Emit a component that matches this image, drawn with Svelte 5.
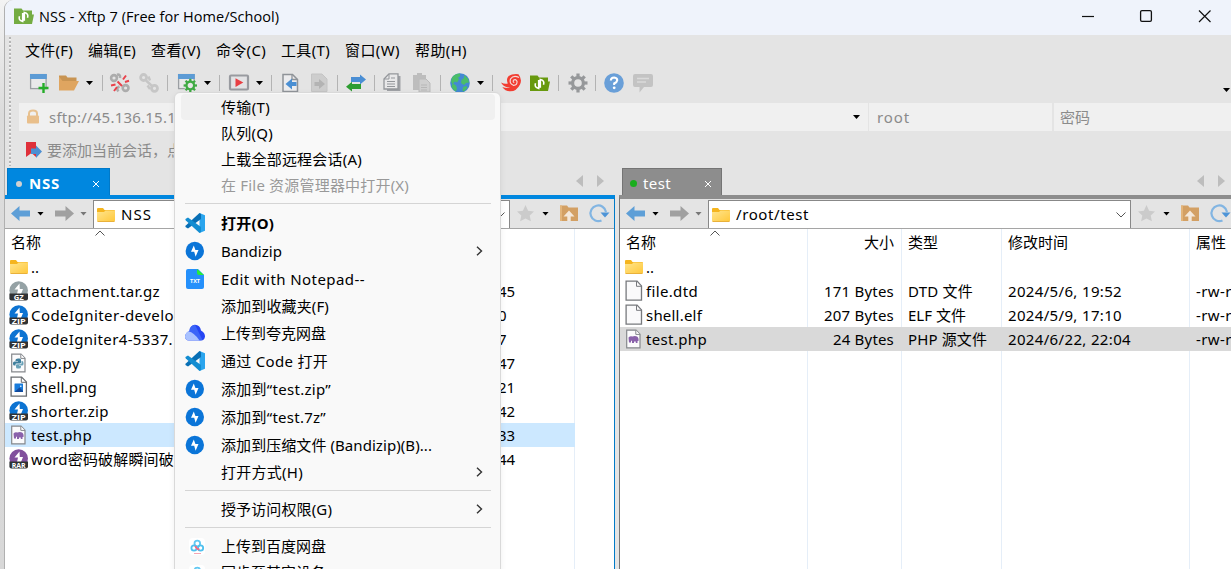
<script>
  function fit(node, w) {
    if (!w) return;
    const cur = node.getBoundingClientRect().width;
    node.style.letterSpacing = (w - cur) / [...node.textContent].length + 'px';
  }

  const menus = [
    ['文件(F)', 48], ['编辑(E)', 48], ['查看(V)', 50], ['命令(C)', 50],
    ['工具(T)', 49], ['窗口(W)', 55], ['帮助(H)', 52]
  ];

  // [icon, gap before it]
  const tools = [
    ['new', 0], ['open', 10], ['caret', 7], ['sep', 9],
    ['unlink', 7], ['link', 9], ['sep', 8],
    ['wingear', 9], ['caret', 7], ['sep', 8],
    ['play', 9], ['caret', 7], ['sep', 8],
    ['fileleft', 8], ['fileright', 9], ['sep', 8],
    ['swap', 8], ['sep', 8],
    ['copy', 7], ['paste', 10], ['sep', 8],
    ['globe', 9], ['caret', 7], ['sep', 8],
    ['swirl', 8], ['xftp', 9], ['sep', 8],
    ['gear', 9], ['sep', 7],
    ['help', 8], ['comment', 9]
  ];

  const local = [
    ['folder', '..', 0, ''],
    ['gz', 'attachment.tar.gz', 129, '45'],
    ['zip', 'CodeIgniter-develo', 143, '0'],
    ['zip', 'CodeIgniter4-5337.', 142, '7'],
    ['py', 'exp.py', 49, '47'],
    ['png', 'shell.png', 66, '21'],
    ['zip', 'shorter.zip', 78, '42'],
    ['php', 'test.php', 61, '33'],
    ['rar', 'word密码破解瞬间破', 143, '44']
  ];

  const remote = [
    ['folder', '..', 0, '', 0, '', 0, '', 0, ''],
    ['file', 'file.dtd', 52, '171 Bytes', 70, 'DTD 文件', 65, '2024/5/6, 19:52', 114, '-rw-r'],
    ['file', 'shell.elf', 56, '207 Bytes', 70, 'ELF 文件', 58, '2024/5/9, 17:10', 114, '-rw-r'],
    ['php', 'test.php', 61, '24 Bytes', 61, 'PHP 源文件', 79, '2024/6/22, 22:04', 123, '-rw-r']
  ];

  // [icon, label, width, height of the row, modifier]
  const context = [
    ['', '传输(T)', 49, 26, 'hot'],
    ['', '队列(Q)', 52, 26, ''],
    ['', '上载全部远程会话(A)', 141, 26, ''],
    ['', '在 File 资源管理器中打开(X)', 188, 26, 'off'],
    ['sep', '', 0, 11, ''],
    ['vscode', '打开(O)', 53, 28, 'bold'],
    ['bandi', 'Bandizip', 61, 28, 'sub'],
    ['txt', 'Edit with Notepad--', 144, 28, ''],
    ['', '添加到收藏夹(F)', 108, 26, ''],
    ['quark', '上传到夸克网盘', 105, 28, ''],
    ['vscode', '通过 Code 打开', 107, 28, ''],
    ['bandi', '添加到“test.zip”', 110, 28, ''],
    ['bandi', '添加到“test.7z”', 105, 28, ''],
    ['bandi', '添加到压缩文件 (Bandizip)(B)...', 211, 28, ''],
    ['', '打开方式(H)', 82, 26, 'sub'],
    ['sep', '', 0, 11, ''],
    ['', '授予访问权限(G)', 111, 26, 'sub'],
    ['sep', '', 0, 11, ''],
    ['baidu', '上传到百度网盘', 105, 26, ''],
    ['baidu', '同步至其它设备', 105, 27, '']
  ];
  const teeth = [0, 45, 90, 135, 180, 225, 270, 315];
</script>

{#snippet archive(color, label)}
  <circle cx="9.7" cy="9.5" r="9.3" fill={color} />
  <path d="M10.5 2.5 L5.5 8.500 H9 L8 13 H12 L14 8 H10.8Z" fill="#fff" />
  <path d="M.4 12.500h18.600v5q0 2-2 2h-14.600q-2 0-2-2z" fill="#303234" />
  <text x="9.700" y="18.600" text-anchor="middle" textLength={label === 'GZ' ? 10 : 14} lengthAdjust="spacingAndGlyphs" class="tag">{label}</text>
{/snippet}

{#snippet page()}
  <path d="M2.700 1.200h9.300l4 4v13.600h-13.300z" fill="#fbfbfc" stroke="#85888c" stroke-width="1.2" />
  <path d="M11.800 1.200v4.2h4.2" fill="#fff" stroke="#85888c" />
{/snippet}

{#snippet gear(cx, cy, r, color)}
  <g transform="translate({cx} {cy})">
    {#each teeth as a}
      <rect x={-r * 0.17} y={-r} width={r * 0.34} height={r * 0.5} fill={color} transform="rotate({a})" />
    {/each}
    <circle r={r * 0.57} fill="none" stroke={color} stroke-width={r * 0.34} />
  </g>
{/snippet}

{#snippet icon(name)}
  <svg class="i" viewBox="0 0 20 20" width="20" height="20" aria-hidden="true">
    {#if name === 'new' || name === 'wingear'}
      <rect x="1.6" y="1.6" width="15.5" height="14" fill="#e9e9ea" stroke="#9b9fa3" stroke-width="1.3" />
      <rect x="1" y="1" width="16.8" height="5" fill="#5c9bd5" />
      {#if name === 'new'}
        <path d="M14.5 10v10M9.5 15h10" stroke="#25ad29" stroke-width="2.4" />
      {:else}
        <circle cx="13.3" cy="12.5" r="6.3" fill="#e6e6e6" />
        {@render gear(13.3, 12.5, 6.7, '#3faa43')}
      {/if}
    {:else if name === 'open'}
      <path d="M0 2.5h7l1.5 2h9v4h-17.5z" fill="#c89452" />
      <path d="M0 17.5V3.5L3.5 8H20L15 17.5z" fill="#dfa560" />
    {:else if name === 'link'}
      <g fill="none" stroke="#c6c6c6" stroke-width="2.800">
        <circle cx="4.600" cy="4.500" r="3" /><circle cx="15.500" cy="15.300" r="3" />
        <path d="M7 7.500L13 13M9.500 3.500l1.500 4M8.500 12.500l2.500 3.500" stroke-width="2.400" />
      </g>
    {:else if name === 'unlink'}
      <g fill="none" stroke="#acacac" stroke-width="2.600">
        <circle cx="4" cy="5" r="2.900" /><circle cx="15.600" cy="15" r="2.900" />
        <path d="M7 1.800Q10.500 1 10 5M8.500 18.300Q5.500 15 9.500 13.500" />
      </g>
      <path d="M13 6.500l3-4M15 9l4-1.200M7 14l-3 4M5.500 11.500l-4.500 1M7.500 8.500l4.500 4.500" stroke="#e9424b" stroke-width="2" />
    {:else if name === 'play'}
      <rect x="1" y="2.5" width="18" height="14" rx="1" fill="#e3e3e5" stroke="#999ba0" stroke-width="2.2" />
      <path d="M6.5 5.2l7.8 4.3-7.8 4.4z" fill="#e83e43" />
    {:else if name === 'fileleft'}
      <path d="M3 1.5h9.5l5 5v12h-14.5z" fill="#ececee" stroke="#8f9398" stroke-width="1.5" />
      <path d="M12 1.5v5h5.500" fill="none" stroke="#8f9398" stroke-width="1.3" />
      <path d="M5.500 11l6.500-5.500V9h4.500v4H12v3.500z" fill="#4a8fd3" />
    {:else if name === 'fileright'}
      <path d="M2.500 1h10.500l5 5v12.500h-15.500z" fill="#cdcdcd" stroke="#c4c4c4" />
      <path d="M16 11L10 6v3H5.500v4H10v3z" fill="#b3b3b3" />
    {:else if name === 'swap'}
      <path d="M5 4h9V1.5l6 5-6 5V9H5z" fill="#4a8ed4" />
      <path d="M15 11H6V8.8L0 13.8l6 4.7V16h9z" fill="#2d9d31" />
    {:else if name === 'copy'}
      <path d="M8 3h10.5v15H5V9z" fill="#9fa1a5" />
      <path d="M2 6l5-5.2h9V16H2z" fill="#e8e8e9" stroke="#94979b" stroke-width="1.3" />
      <path d="M7 1v5H2M5 8.5h8M5 11h8M5 13.5h8M9 5h4" stroke="#94979b" fill="none" />
    {:else if name === 'paste'}
      <path d="M1 2h4v-2h5v2h4v15H1z" fill="#bdbdbd" />
      <path d="M7 6h7l4 4v9H7z" fill="#cfcfcf" stroke="#bababa" /><path d="M9 12h6M9 14.500h6M9 17h6" stroke="#b7b7b7" />
    {:else if name === 'globe'}
      <circle cx="10" cy="10" r="9.8" fill="#4389d3" />
      <path d="M2 4.500q3-3.800 8-4v3l-2 1 1 2-2 3-2-1-2 2 3 2 1 3-1 3q-3-1.500-4.600-5l1-2-1.300-3zM14 2l4 3.500 1 4-3 .5-2 2-3-2 .5-3 2.500-2zM13 14l3-1 1.500 1.500-3 3.500-2 .5z" fill="#4abd69" />
    {:else if name === 'swirl'}
      <path d="M17.500 1.200Q21.500 6.500 19 11.500Q15.500 18.500 9 18.300Q4 18.200 1.300 14Q6 15.800 9.500 14.500L7 14.500Q2 13.500 0 9.500Q3.500 11.300 6.800 10.500Q4 3.500 11 1.500Q14.500.5 17.500 1.200z" fill="#f23d31" />
      <path d="M18 4.500Q12.500 1.500 9.500 6Q8 10.500 12.300 12.300Q16.500 12.500 16 8.300Q14.500 5.500 12.500 7.300Q11.700 9.300 13.300 9.500" fill="none" stroke="#f4d9d6" stroke-width="1.200" />
    {:else if name === 'xftp' || name === 'app'}
      <path d="M0 2.500h7.500l1.500 2h9v4h2l-2 9.500H0z" fill={name === 'app' ? '#74ac42' : '#68990e'} />
      <path d="M8.700 7V15.500q-4.700-1-3.200-5.200M10.300 14.800V6.500q4.700 1 3.200 5.200" fill="none" stroke="#fff" stroke-width="1.600" />
    {:else if name === 'gear'}
      {@render gear(10, 10, 9.500, '#96989a')}
    {:else if name === 'help'}
      <circle cx="10" cy="10" r="9.800" fill="#699fd8" />
      <path d="M6.800 7.500Q7 4.500 10.200 4.500Q13.300 4.800 13.200 7.300Q13 9 10.200 10.500V12" fill="none" stroke="#fff" stroke-width="2.100" />
      <circle cx="10.200" cy="14.800" r="1.400" fill="#fff" />
    {:else if name === 'comment'}
      <path d="M2 1h16q2 0 2 2v9q0 2-2 2h-7l-4.500 5.500V14H2q-2 0-2-2V3q0-2 2-2z" fill="#c3c3c3" />
      <path d="M4 5.500h12M4 9h9" stroke="#dadada" stroke-width="1.500" />
    {:else if name === 'folder'}
      <path d="M1 4q0-1 1-1h5l1.500 2H18q1 0 1 1v3H1z" fill="#f5b51f" />
      <path d="M1 7h7l1.500-1.500H19V15.500q0 1-1 1H2q-1 0-1-1z" fill="url(#gold)" /><path d="M1.500 16.500h17" stroke="#e9b13a" />
    {:else if name === 'gz'}{@render archive('#95a2a5', 'GZ')}
    {:else if name === 'zip'}{@render archive('#0c73d2', 'ZIP')}
    {:else if name === 'rar'}{@render archive('#81509d', 'RAR')}
    {:else if name === 'file'}
      <path d="M2.100.1h11l4.400 4.800v14.200H2.100z" fill="#fafafb" stroke="#77797d" stroke-width="1.300" /><path d="M12.500 .1v5.200h5" fill="none" stroke="#77797d" />
    {:else if name === 'py'}
      {@render page()}
      <path d="M9 5.500h1.500q1.500 0 1.500 1.500v2.500q0 1-1 1H7.500q-1 0-1 1v1H5.500q-1.500 0-1.500-1.500V10q0-1.500 1.500-1.500H9V8H6.500V7q0-1.500 2.500-1.500z" fill="#3f7f9d" />
      <path d="M12.500 8H13q1.500 0 1.500 2v1q0 1.500-1.500 1.500h-3v.5h2V14q0 1.500-2 1.500H8.500q-1.500 0-1.500-1.500v-1.800q0-1 1-1h3.500q1 0 1-1z" fill="#69a2b8" />
    {:else if name === 'png'}
      <path d="M2.100.1h10.500l4.800 4.800v14.200H2.100z" fill="#fff" stroke="#696c70" stroke-width="1.300" /><path d="M12.300 .1v5.200h5.100" fill="none" stroke="#696c70" />
      <rect x="5.500" y="6.500" width="8.500" height="8.500" rx=".5" fill="#187bdb" /><path d="M5.500 15l5-4.500 3.500 3.500v1z" fill="#124a9c" /><path d="M11 8.500h1.500v1.500H11z" fill="#c7e8fb" />
    {:else if name === 'php'}
      {@render page()}
      <path d="M4.500 8.500q2-2 3.700-1 3-1 4.800 0 2 1 1.500 4.500h-1V14h-1.700v-1.500h-1.800V14H8v-2l-1-.5v2H5z" fill="#8a62ab" />
    {:else if name === 'vscode'}
      <path d="M14.500 0L20 2.300V17.700L14.500 20z" fill="#2aa5ee" />
      <path d="M14.500 0L16 1V6L3 15.500 0.800 14.300Q-.2 13.500.8 12.500z" fill="#086fb5" />
      <path d="M14.500 20L16 19V14L3 4.500.8 5.700Q-.2 6.500.8 7.500z" fill="#138dd1" />
    {:else if name === 'bandi'}
      <circle cx="9.800" cy="10" r="9.200" fill="#0b75d8" /><path d="M8.800 4.500L6 10.700H9.200L10.600 15.700 13.500 9H10.400z" fill="#fff" />
    {:else if name === 'txt'}
      <path d="M3 0h10l6 6v12q0 2-2 2H3q-2 0-2-2V2q0-2 2-2z" fill="#2590fb" /><path d="M12 0l7 6h-5q-2 0-2-2z" fill="#27ee37" />
      <text x="10" y="14" text-anchor="middle" class="tag small">TXT</text>
    {:else if name === 'quark'}
      <path d="M4.300 8Q5 2 10 1.800Q15 2 16 7.500Q20 9.500 20 13.500Q19.500 17.500 16 17.500H4Q0 17.200 0 13.500Q.5 9.500 4.300 8z" fill="#2545f4" />
      <path d="M4.300 8Q5 2.500 10 1.800L17.500 17 14 17.500z" fill="#4776fb" opacity=".65" />
      <path d="M3.500 8.300Q9 9.500 14.500 17.500H4Q0 17.200 0 13.500Q.5 9.500 3.500 8.300z" fill="#a9c2ff" />
    {:else if name === 'baidu'}
      <rect x="4" y="2" width="16" height="17" rx="4" fill="#fff" />
      <g fill="none" stroke-width="1.800"><circle cx="12.300" cy="7.500" r="2.800" stroke="#62c8f2" /><circle cx="9" cy="12" r="2.600" stroke="#4fc0ee" /><circle cx="15.600" cy="12" r="2.600" stroke="#4fc0ee" /><path d="M10.300 10q1 3 4 3.500" stroke="#f36882" /></g><path d="M9 17.500h7" stroke="#f6a5b3" />
    {:else if name === 'back'}
      <path d="M0 9.500L8.500 2V6.500H19v6H8.500V17z" fill="#5e9fd7" />
    {:else if name === 'forward'}
      <path d="M20 9.500L11.500 2V6.500H1v6h10.500V17z" fill="#a0a0a0" />
    {:else if name === 'star'}
      <path d="M9.500 1l2.600 5.700 5.900.8-4.300 4 1.200 5.800L9.500 14.500l-5.400 2.800L5.300 11.500 1 7.500 6.900 6.700z" fill="#cbcbcb" />
    {:else if name === 'up'}
      <path d="M1 1.500h7l1.500 2H19V17H1z" fill="#d3a064" /><path d="M10 6.500l5.500 6H11.700v4.500H8.300V12.500H4.500z" fill="#f4e8da" /><path d="M2 1.500V17" stroke="#e3b57b" stroke-width="2" />
    {:else if name === 'refresh'}
      <path d="M12.500 16.400A7.800 7.800 0 1 1 17 8" fill="none" stroke="#82b5e2" stroke-width="2.200" /><path d="M11.500 8.500H20.500L16 13.500z" fill="#4d94d7" />
    {:else if name === 'lock'}
      <path d="M6 9V6.500Q6 3.500 10 3.500T14 6.500V9" fill="none" stroke="#e7c190" stroke-width="2" /><rect x="4" y="8.500" width="12" height="8" rx="1" fill="#e9bf8b" />
    {:else if name === 'mark'}
      <path d="M1 2H11V17L6.500 13 1 17z" fill="#df303a" /><path d="M6 8.500h5V5.500l6 6L11 18v-4H6z" fill="#4d8fd2" />
    {/if}
  </svg>
{/snippet}

{#snippet nav(path, w)}
  <div class="nav">
    {@render icon('back')}<i class="caret"></i>
    {@render icon('forward')}<i class="caret dim"></i>
    <div class="path">
      {@render icon('folder')}<span use:fit={w}>{path}</span>
      <svg class="down" width="10" height="6" viewBox="0 0 10 6"><path d="M.5.5L5 5 9.500.5" fill="none" stroke="#555" /></svg>
    </div>
    {@render icon('star')}<i class="caret"></i>{@render icon('up')}{@render icon('refresh')}
  </div>
{/snippet}

{#snippet sortmark()}
  <svg class="sortmark" width="10" height="6" viewBox="0 0 10 6"><path d="M.5 5.500L5 1l4.500 4.500" fill="none" stroke="#555" /></svg>
{/snippet}

{#snippet arrows()}
  <div class="arrows"><i></i><i class="r"></i></div>
{/snippet}

<svg class="defs" width="0" height="0"><linearGradient id="gold" x1="0" y1="0" x2="1" y2="1"><stop offset="0" stop-color="#ffe58e" /><stop offset="1" stop-color="#ffc83b" /></linearGradient></svg>

<div class="screen">
  <div class="window">
    <header>
      {@render icon('app')}
      <span class="title" use:fit={240}>NSS - Xftp 7 (Free for Home/School)</span>
      <svg class="controls" width="134" height="14" viewBox="0 0 134 14"><path d="M1 7.500H13" stroke="#111" stroke-width="1.200" /><rect x="59.600" y="1.600" width="10.800" height="10.800" rx="1.300" fill="none" stroke="#111" stroke-width="1.300" /><path d="M118 1.500L129.500 13M129.500 1.500L118 13" stroke="#111" stroke-width="1.200" /></svg>
    </header>

    <div class="bars">
      <div class="menubar">
        {#each menus as [label, w]}<span use:fit={w}>{label}</span>{/each}
      </div>
      <div class="tools">
        {#each tools as [name, gap]}
          <div class="tool" style:margin-left="{gap}px">
            {#if name === 'sep'}<i class="line"></i>{:else if name === 'caret'}<i class="caret"></i>{:else}{@render icon(name)}{/if}
          </div>
        {/each}
        <i class="caret more"></i>
      </div>
      <div class="address">
        <div class="host">{@render icon('lock')}<span use:fit={127}>sftp://45.136.15.1</span><i class="caret"></i></div>
        <div class="user"><span use:fit={33}>root</span></div>
        <div class="pass"><span>密码</span></div>
      </div>
      <div class="hint">{@render icon('mark')}<span>要添加当前会话，点</span></div>
    </div>

    <main>
      <section class="pane left">
        <div class="tabs"><div class="tab"><i class="dot"></i><span use:fit={31}>NSS</span><svg width="8" height="8" viewBox="0 0 8 8"><path d="M1 1l6 6M7 1L1 7" stroke="#fff" /></svg></div>{@render arrows()}</div>
        <div class="frame">
          {@render nav('NSS', 31)}
          <div class="list">
            {@render sortmark()}
            <div class="row head"><span>名称</span></div>
            {#each local as [ic, name, w, size]}
              <div class="row" class:sel={name === 'test.php'}>
                <div class="name">{@render icon(ic)}<span use:fit={w}>{name}</span></div>
                <div class="size">{size}</div>
              </div>
            {/each}
          </div>
        </div>
      </section>
      <section class="pane right">
        <div class="tabs"><div class="tab"><i class="dot"></i><span use:fit={28}>test</span><svg width="8" height="8" viewBox="0 0 8 8"><path d="M1 1l6 6M7 1L1 7" stroke="#fff" /></svg></div>{@render arrows()}</div>
        <div class="frame">
          {@render nav('/root/test', 73)}
          <div class="list">
            {@render sortmark()}
            <div class="row head"><span>名称</span><span class="num">大小</span><span>类型</span><span>修改时间</span><span>属性</span></div>
            {#each remote as [ic, name, w, size, sw, type, tw, time, dw, attr]}
              <div class="row" class:sel={name === 'test.php'}>
                <div class="name">{@render icon(ic)}<span use:fit={w}>{name}</span></div>
                <div class="num"><span use:fit={sw}>{size}</span></div>
                <div><span use:fit={tw}>{type}</span></div>
                <div><span use:fit={dw}>{time}</span></div>
                <div class="attr">{attr}</div>
              </div>
            {/each}
          </div>
        </div>
      </section>
    </main>
  </div>

  <div class="context">
    {#each context as [ic, label, w, h, mod]}
      {#if ic === 'sep'}
        <div class="rule" style:height="{h}px"></div>
      {:else}
        <div class="item {mod}" style:height="{h}px">
          <div class="slot">{#if ic}{@render icon(ic)}{/if}</div>
          <span use:fit={w}>{label}</span>
          {#if mod === 'sub'}<svg class="chev" width="7" height="10" viewBox="0 0 7 10"><path d="M1 .8L5.500 5 1 9.200" fill="none" stroke="#333" stroke-width="1.400" /></svg>{/if}
        </div>
      {/if}
    {/each}
  </div>
</div>

<style>
  .screen { position: relative; width: 1231px; height: 569px; overflow: hidden; background: linear-gradient(#f3f3f3, #dcdcdc 20%, #d8d8d8); color: #000; font: 15px/20px "Noto Sans", "Noto Sans CJK SC", sans-serif; white-space: nowrap; box-sizing: border-box; padding-left: 4px; }
  .defs { position: absolute; }
  .window { width: 1228px; height: 580px; box-sizing: border-box; border-left: 1px solid #b0b0b0; border-top-left-radius: 9px; background: #e4e4e4; overflow: hidden; }
  .i { flex: none; display: block; overflow: visible; }
  .tag { font: bold 7px "Open Sans", sans-serif; fill: #fff; }
  .tag.small { font-size: 5.5px; }
  header { height: 35px; background: #eff3fb; display: flex; align-items: center; padding: 0 16px 3px 9px; box-sizing: border-box; }
  .title { margin-left: 5px; font: 14.5px/20px "Open Sans", sans-serif; padding-top: 1px; }
  .controls { margin-left: auto; margin-right: 1px; }
  .bars { height: 133px; padding-left: 14px; position: relative; }
  .bars::before { content: ""; position: absolute; left: 4px; top: 2px; bottom: 2px; width: 2px; background: repeating-linear-gradient(#b5b5b5 0 2px, #f4f4f4 2px 3px, #e4e4e4 3px 4px); }
  .menubar { display: flex; gap: 15px; padding: 0 0 2px 6px; height: 31px; align-items: center; box-sizing: border-box; }
  .tools { display: flex; height: 37px; padding: 0 0 3px 10px; box-sizing: border-box; align-items: center; }
  .tool { display: flex; flex: none; }
  .line { width: 1px; height: 16px; background: #b3b3b3; }
  .caret { flex: none; display: block; width: 7px; height: 4px; background: #000; clip-path: polygon(0 0, 100% 0, 50% 100%); }
  .caret.dim { background: #777; }
  .more { margin: 14px 2px 0 auto; }
  .address { display: flex; gap: 1px; height: 28px; color: #8b8b8b; }
  .address > div { background: #f0f0f0; display: flex; align-items: center; }
  .address .host { width: 849px; gap: 6px; padding: 0 8px 0 4px; box-sizing: border-box; }
  .host .caret { margin-left: auto; }
  .address .user { width: 183px; padding-left: 8px; box-sizing: border-box; }
  .user span { padding-bottom: 1px; }
  .address .pass { flex: 1; padding-left: 6px; margin-left: 1px; }
  .hint { display: flex; align-items: center; gap: 2px; padding-left: 6px; height: 38px; color: #8b8b8b; }
  main { display: flex; }
  .pane { flex: none; }
  .left { width: 611px; margin-right: 3px; }
  .right { width: 650px; }
  .tabs { display: flex; justify-content: space-between; height: 27px; align-items: flex-end; }
  .left .tabs { padding-left: 2px; }
  .right .tabs { padding-left: 3px; width: 609px; box-sizing: border-box; }
  .tab { height: 27px; box-sizing: border-box; color: #fff; display: flex; align-items: center; padding: 4px 9px 0 8px; }
  .tab span { margin-top: -2px; }
  .left .tab span { margin-top: -3px; }
  .tab svg { margin-left: auto; margin-bottom: 1px; }
  .left .tab { width: 103px; background: #0087df; border: 1px solid #0079c8; border-bottom: 0; font-weight: bold; }
  .right .tab { width: 100px; background: #8d8d8d; border: 1px solid #747474; border-bottom: 0; }
  .dot { width: 7px; height: 7px; border-radius: 50%; background: #d1d1d1; margin: 0 6px 1px -1px; }
  .left .dot { width: 6px; height: 6px; margin: 0 7px 1px 0; }
  .right .dot { background: #19ad1d; }
  .arrows { display: flex; gap: 14px; margin: 0 12px 8px 0; }
  .right .arrows { margin-right: 3px; }
  .arrows i { width: 7px; height: 12px; background: #bdbdbd; clip-path: polygon(0 50%, 100% 0, 100% 100%); }
  .arrows .r { transform: scaleX(-1); }
  .frame { height: 385px; border-top: 4px solid #0087df; border-right: 1px solid #007ac8; box-sizing: border-box; width: 610px; }
  .right .frame { width: 650px; border-top-color: #8d8d8d; border-left: 1px solid #777; border-right: 0; }
  .nav { height: 30px; background: #e4e4e4; display: flex; align-items: center; padding-left: 6px; border-bottom: 1px solid #a5a5a5; box-sizing: border-box; width: 609px; }
  .right .nav { width: 640px; }
  .nav .caret { margin: 0 10px 0 6px; }
  .nav .caret.dim { margin: 0 6px 0 6px; }
  .path { flex: none; align-self: stretch; margin-top: 1px; width: 417px; background: #fff; border: 1px solid #888; border-bottom: 0; display: flex; align-items: center; padding: 0 4px 0 2px; box-sizing: border-box; margin-right: 6px; }
  .right .path { width: 423px; }
  .path span { margin: -2px 0 0 5px; }
  .down { margin-left: auto; }
  .nav .i:nth-last-child(1) { margin-left: 10px; }
  .list { background: #fff; height: 351px; position: relative; padding-top: 2px; box-sizing: border-box; }
  .left .list { background: linear-gradient(90deg, transparent 569px, #e5eef8 569px 570px, transparent 570px), #fff; }
  .right .list { background: linear-gradient(90deg, transparent 187px, #e5eef8 187px 188px, transparent 188px 281px, #e5eef8 281px 282px, transparent 282px 381px, #e5eef8 381px 382px, transparent 382px 569px, #e5eef8 569px 570px, transparent 570px), #fff; }
  .sortmark { position: absolute; top: 1px; left: 90px; }
  .row { height: 24px; display: flex; align-items: center; box-sizing: border-box; }
  .row.head { padding-bottom: 2px; }
  .left .row { width: 570px; justify-content: space-between; padding-left: 4px; }
  .left .row.sel { background: #cce8ff; }
  .left .size { width: 77px; text-align: left; flex: none; }
  .name { display: flex; align-items: center; gap: 2px; }
  .left .row.head { padding-left: 6px; }
  .right .row { display: grid; grid-template-columns: 187px 94px 100px 188px 80px; }
  .right .row > * { padding-left: 7px; }
  .right .row > .name { padding-left: 4px; }
  .right .row > :first-child:not(.name) { padding-left: 6px; }
  .right .row .num { text-align: right; padding-right: 0; width: 86px; box-sizing: border-box; margin-left: 188px; grid-column: 1; grid-row: 1; }
  .right .row > :first-child { grid-column: 1; grid-row: 1; }
  .right .row > :nth-child(3) { grid-column: 3; }
  .right .row > :nth-child(4) { grid-column: 4; }
  .right .row > :nth-child(5) { grid-column: 5; }
  .attr { letter-spacing: .4px; }
  .right .sel { background: #d9d9d9; }
  .context { position: absolute; left: 174px; top: 92px; width: 327px; height: 490px; box-sizing: border-box; border: 1px solid #d9d9d9; border-radius: 6px; background: #f9f9f9; box-shadow: 0 2px 6px #0001; padding-top: 1px; }
  .item { display: flex; align-items: center; margin: 0 5px 0 6px; padding: 0 12px 0 4px; border-radius: 4px; }
  .item > span { margin-top: -1px; }
  .hot { background: #f0f0f0; }
  .off { color: #999; }
  .bold { font-weight: bold; }
  .slot { width: 36px; height: 20px; }
  .chev { margin-left: auto; }
  .rule { margin: 0 9px 0 10px; background: linear-gradient(#d5d5d5, #d5d5d5) 0 5px / 100% 1px no-repeat; }
</style>
